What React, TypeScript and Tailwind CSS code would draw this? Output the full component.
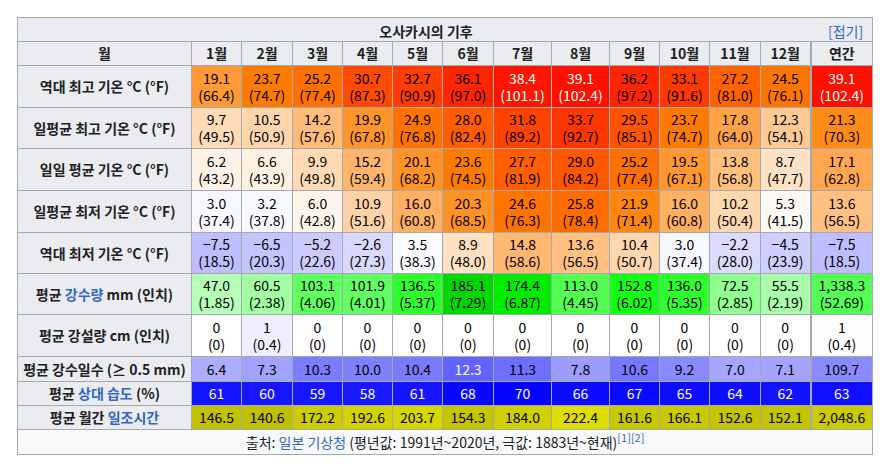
import type { ReactNode } from 'react';

type Cell = { top: string; bottom?: string; bg: string; light?: boolean };
type Row = { label: ReactNode; height: number; cells: Cell[] };

const clamp = (n: number) => Math.max(0, Math.min(255, Math.round(n)));
const range = (v: number, start: number, stop: number) => clamp((255 * (v - start)) / (stop - start));
const rgb = (r: number, g: number, b: number) => `rgb(${r},${g},${b})`;

function tempColor(c: number) {
  if (c < 4.5) {
    const i = range(c, -42.75, 4.5);
    return rgb(i, i, 255);
  }
  return rgb(range(c, 60, 41.5), range(c, 41.5, 4.5), range(c, 23, 4.5));
}

function precipColor(v: number) {
  if (v < 165) {
    const i = range(v, 165, 0);
    return rgb(i, 255, i);
  }
  return rgb(0, range(v, 300, 165), 0);
}

const snowColor = (v: number) => {
  const i = range(v, 15, 0);
  return rgb(i, i, 255);
};
const rainDayColor = (v: number) => {
  const i = range(v, 20, 0);
  return rgb(i, i, 255);
};
const humidColor = (v: number) => {
  const i = clamp((72 - v) * 1.8);
  return rgb(i, i, 255);
};
const sunColor = (v: number) => {
  const i = clamp(140 + 0.37 * v);
  return rgb(i, i, 0);
};

const num = (s: string) => Number(s.replace('−', '-').replace(',', ''));

function tempRow(pairs: string[], white: number[] = []): Cell[] {
  return pairs.map((p, i) => {
    const [c, f] = p.split(' ');
    return { top: c, bottom: `(${f})`, bg: tempColor(num(c)), light: white.includes(i) };
  });
}

// annual totals are coloured by their monthly average
function pairRow(pairs: string[], color: (v: number) => string): Cell[] {
  return pairs.map((p, i) => {
    const [a, b] = p.split(' ');
    const v = i === 12 ? num(a) / 12 : num(a);
    return { top: a, bottom: `(${b})`, bg: color(v) };
  });
}

function singleRow(
  vals: string[],
  color: (v: number) => string,
  white: (i: number) => boolean = () => false,
  total = true,
): Cell[] {
  return vals.map((a, i) => {
    const v = i === 12 && total ? num(a) / 12 : num(a);
    return { top: a, bg: color(v), light: white(i) };
  });
}

const Link = ({ children }: { children: ReactNode }) => <span className="text-[#3366cc]">{children}</span>;

const rows: Row[] = [
  {
    label: '역대 최고 기온 °C (°F)',
    height: 42,
    cells: tempRow(
      ['19.1 66.4', '23.7 74.7', '25.2 77.4', '30.7 87.3', '32.7 90.9', '36.1 97.0', '38.4 101.1', '39.1 102.4', '36.2 97.2', '33.1 91.6', '27.2 81.0', '24.5 76.1', '39.1 102.4'],
      [6, 7, 12],
    ),
  },
  {
    label: '일평균 최고 기온 °C (°F)',
    height: 41,
    cells: tempRow(['9.7 49.5', '10.5 50.9', '14.2 57.6', '19.9 67.8', '24.9 76.8', '28.0 82.4', '31.8 89.2', '33.7 92.7', '29.5 85.1', '23.7 74.7', '17.8 64.0', '12.3 54.1', '21.3 70.3']),
  },
  {
    label: '일일 평균 기온 °C (°F)',
    height: 42,
    cells: tempRow(['6.2 43.2', '6.6 43.9', '9.9 49.8', '15.2 59.4', '20.1 68.2', '23.6 74.5', '27.7 81.9', '29.0 84.2', '25.2 77.4', '19.5 67.1', '13.8 56.8', '8.7 47.7', '17.1 62.8']),
  },
  {
    label: '일평균 최저 기온 °C (°F)',
    height: 42,
    cells: tempRow(['3.0 37.4', '3.2 37.8', '6.0 42.8', '10.9 51.6', '16.0 60.8', '20.3 68.5', '24.6 76.3', '25.8 78.4', '21.9 71.4', '16.0 60.8', '10.2 50.4', '5.3 41.5', '13.6 56.5']),
  },
  {
    label: '역대 최저 기온 °C (°F)',
    height: 41,
    cells: tempRow(['−7.5 18.5', '−6.5 20.3', '−5.2 22.6', '−2.6 27.3', '3.5 38.3', '8.9 48.0', '14.8 58.6', '13.6 56.5', '10.4 50.7', '3.0 37.4', '−2.2 28.0', '−4.5 23.9', '−7.5 18.5']),
  },
  {
    label: (
      <>
        평균 <Link>강수량</Link> mm (인치)
      </>
    ),
    height: 41,
    cells: pairRow(
      ['47.0 1.85', '60.5 2.38', '103.1 4.06', '101.9 4.01', '136.5 5.37', '185.1 7.29', '174.4 6.87', '113.0 4.45', '152.8 6.02', '136.0 5.35', '72.5 2.85', '55.5 2.19', '1,338.3 52.69'],
      precipColor,
    ),
  },
  {
    label: '평균 강설량 cm (인치)',
    height: 42,
    cells: pairRow(['0 0', '1 0.4', '0 0', '0 0', '0 0', '0 0', '0 0', '0 0', '0 0', '0 0', '0 0', '0 0', '1 0.4'], snowColor),
  },
  {
    label: '평균 강수일수 (≥ 0.5 mm)',
    height: 25,
    cells: singleRow(['6.4', '7.3', '10.3', '10.0', '10.4', '12.3', '11.3', '7.8', '10.6', '9.2', '7.0', '7.1', '109.7'], rainDayColor, (i) => i === 5),
  },
  {
    label: (
      <>
        평균 <Link>상대 습도</Link> (%)
      </>
    ),
    height: 24,
    cells: singleRow(['61', '60', '59', '58', '61', '68', '70', '66', '67', '65', '64', '62', '63'], humidColor, () => true, false),
  },
  {
    label: (
      <>
        평균 월간 <Link>일조시간</Link>
      </>
    ),
    height: 24,
    cells: singleRow(['146.5', '140.6', '172.2', '192.6', '203.7', '154.3', '184.0', '222.4', '161.6', '166.1', '152.6', '152.1', '2,048.6'], sunColor),
  },
];

const months = ['1월', '2월', '3월', '4월', '5월', '6월', '7월', '8월', '9월', '10월', '11월', '12월'];
const widths = [50, 51, 50, 50, 50, 51, 58, 58, 50, 50, 51, 50];

export default function App() {
  return (
    <div className="min-h-screen bg-white pl-[17px] pt-[17px] font-['Noto_Sans_CJK_KR','Noto_Sans',sans-serif] text-[14px] text-[#202122]">
      <table className="w-[856px] table-fixed border-collapse bg-[#f8f9fa]">
        <colgroup>
          <col className="w-[174px]" />
          {widths.map((w, i) => (
            <col key={i} style={{ width: w }} />
          ))}
          <col className="w-[62px]" />
        </colgroup>
        <tbody>
          <tr className="h-[24px]">
            <th colSpan={14} className="border border-[#a2a9b1] bg-[#eaecf0] p-0 leading-[17px]">
              <div className="flex items-center pl-[6px] pr-[9px] pt-[3px]">
                <span className="flex-1 text-center font-bold">오사카시의 기후</span>
                <span className="font-normal text-[#3366cc]">[접기]</span>
              </div>
            </th>
          </tr>
          <tr className="h-[24px]">
            <th className="border border-[#a2a9b1] bg-[#eaecf0] px-1 font-bold leading-[17px]">월</th>
            {months.map((m) => (
              <th key={m} className="border border-[#a2a9b1] bg-[#eaecf0] px-0 font-bold leading-[17px]">
                {m}
              </th>
            ))}
            <th className="border border-[#a2a9b1] border-l-2 bg-[#eaecf0] px-0 font-bold leading-[17px]">연간</th>
          </tr>
          {rows.map((r, ri) => (
            <tr key={ri} style={{ height: r.height }}>
              <th className="border border-[#a2a9b1] bg-[#eaecf0] px-1 font-bold leading-[17px] whitespace-nowrap">{r.label}</th>
              {r.cells.map((c, ci) => (
                <td
                  key={ci}
                  style={{ backgroundColor: c.bg }}
                  className={`border border-[#a2a9b1] px-0 text-center leading-[17px] whitespace-nowrap ${ci === 12 ? 'border-l-2' : ''} ${c.light ? 'text-white' : 'text-black'}`}
                >
                  {c.top}
                  {c.bottom && (
                    <>
                      <br />
                      {c.bottom}
                    </>
                  )}
                </td>
              ))}
            </tr>
          ))}
          <tr className="h-[25px]">
            <td colSpan={14} className="border border-[#a2a9b1] bg-[#f8f9fa] text-center leading-[17px]">
              출처: <Link>일본 기상청</Link> (평년값: 1991년~2020년, 극값: 1883년~현재)
              <sup className="text-[11px] text-[#3366cc]">[1][2]</sup>
            </td>
          </tr>
        </tbody>
      </table>
    </div>
  );
}
